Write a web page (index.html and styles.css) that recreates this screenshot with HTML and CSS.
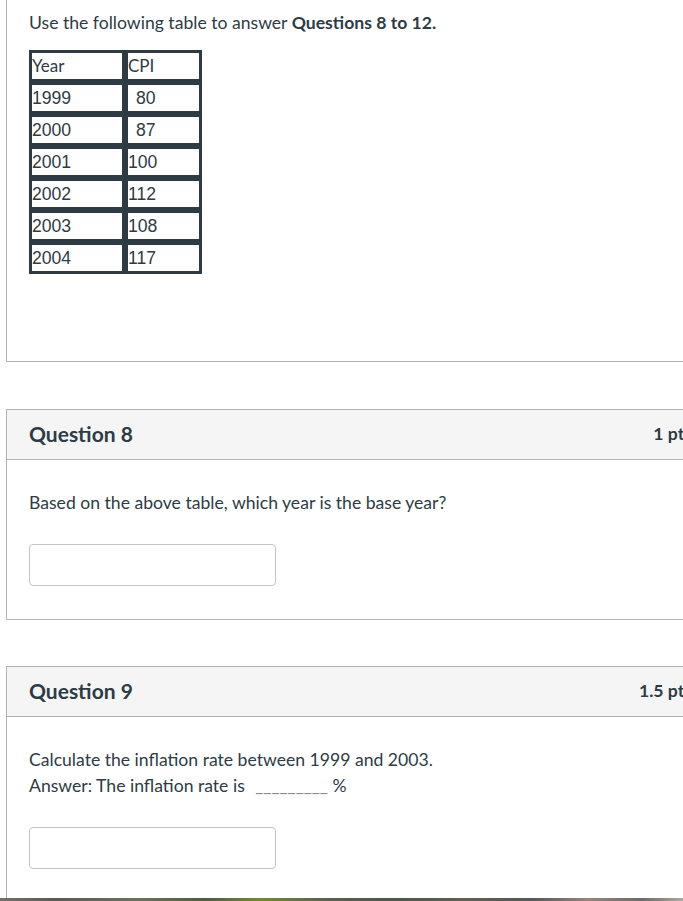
FILE: index.html
```html
<!DOCTYPE html>
<html>
<head>
<meta charset="utf-8">
<link rel="stylesheet" href="styles.css">
</head>
<body>
<div class="page">
  <div class="panel intro">
    <p class="lead">Use the following table to answer <strong>Questions 8 to 12.</strong></p>
    <table class="cpi">
      <tr><td class="c1 hd">Year</td><td class="c2 hd">CPI</td></tr>
      <tr><td class="c1">1999</td><td class="c2 ind">80</td></tr>
      <tr><td class="c1">2000</td><td class="c2 ind">87</td></tr>
      <tr><td class="c1">2001</td><td class="c2">100</td></tr>
      <tr><td class="c1">2002</td><td class="c2">112</td></tr>
      <tr><td class="c1">2003</td><td class="c2">108</td></tr>
      <tr><td class="c1">2004</td><td class="c2">117</td></tr>
    </table>
  </div>

  <div class="panel question">
    <div class="qhead"><span class="qtitle">Question 8</span><span class="pts">1 pts</span></div>
    <div class="qbody">
      <p class="qline">Based on the above table, which year is the base year?</p>
      <div class="answer"></div>
    </div>
  </div>

  <div class="panel question last">
    <div class="qhead"><span class="qtitle">Question 9</span><span class="pts">1.5 pts</span></div>
    <div class="qbody q9">
      <p class="qline2">Calculate the inflation rate between 1999 and 2003.</p>
      <p class="qline2">Answer: The inflation rate is <span class="blank">_________</span> %</p>
      <div class="answer a9"></div>
    </div>
  </div>
</div>
<div class="strip"></div>
</body>
</html>
```

FILE: styles.css
```css
html, body {
  margin: 0;
  padding: 0;
  overflow: hidden;
  background: #ffffff;
}
body {
  font-family: Lato, "Noto Sans", sans-serif;
  font-size: 17.6px;
  color: #2d3b45;
}
.page {
  padding-left: 6px;
  width: 702px;
}
.panel {
  border: 1px solid #b3b3b3;
  background: #ffffff;
}
.intro {
  border-top: none;
  padding: 12px 22px 87px 22px;
}
.lead {
  margin: 0;
  line-height: 22px;
}
.lead strong {
  font-weight: 700;
}
.cpi {
  margin-top: 16px;
  border-collapse: separate;
  border-spacing: 0;
  font-family: "Liberation Sans", Arial, sans-serif;
  font-size: 17.6px;
  color: #2d3b45;
}
.cpi td {
  border: 3px solid #2d3b45;
  height: 26px;
  padding: 0;
  line-height: 26px;
  vertical-align: middle;
}
.cpi td.hd {
  font-family: Lato, "Noto Sans", sans-serif;
  font-size: 17px;
}
.c1 { width: 90px; }
.c2 { width: 71px; }
.cpi td.ind { padding-left: 8px; width: 63px; }
.question {
  margin-top: 47px;
}
.question.last {
  margin-top: 46px;
}
.qhead {
  background: #f5f5f5;
  border-bottom: 1px solid #b3b3b3;
  height: 25px;
  padding: 11px 15px 13px 22px;
  display: flex;
  justify-content: space-between;
  align-items: center;
}
.qtitle {
  font-weight: 700;
  font-size: 21px;
  line-height: 25px;
}
.pts {
  font-weight: 700;
  font-size: 17.6px;
  line-height: 25px;
  color: #2d3b45;
}
.qbody {
  padding: 31px 22px 33px 22px;
}
.qline {
  margin: 0;
  line-height: 24px;
}
.q9 {
  padding-top: 30px;
  padding-bottom: 60px;
}
.qline2 {
  margin: 0;
  line-height: 26px;
}
.blank {
  color: #8a8a8a;
  margin-left: 6px;
}
.answer {
  margin-top: 29px;
  width: 245px;
  height: 40px;
  border: 1px solid #c4c4c4;
  border-radius: 4px;
}
.a9 {
  margin-top: 28px;
}
.strip {
  position: fixed;
  left: 0;
  right: 0;
  bottom: 0;
  height: 3px;
  background: linear-gradient(90deg, #7a6f68 0%, #5c5a50 8%, #6b7258 20%, #4e5e3e 30%, #6f8a3a 38%, #5a6148 48%, #4a5a46 58%, #60604c 68%, #56585a 78%, #9a8474 86%, #6e6a66 94%, #b0a89a 100%);
}
```
